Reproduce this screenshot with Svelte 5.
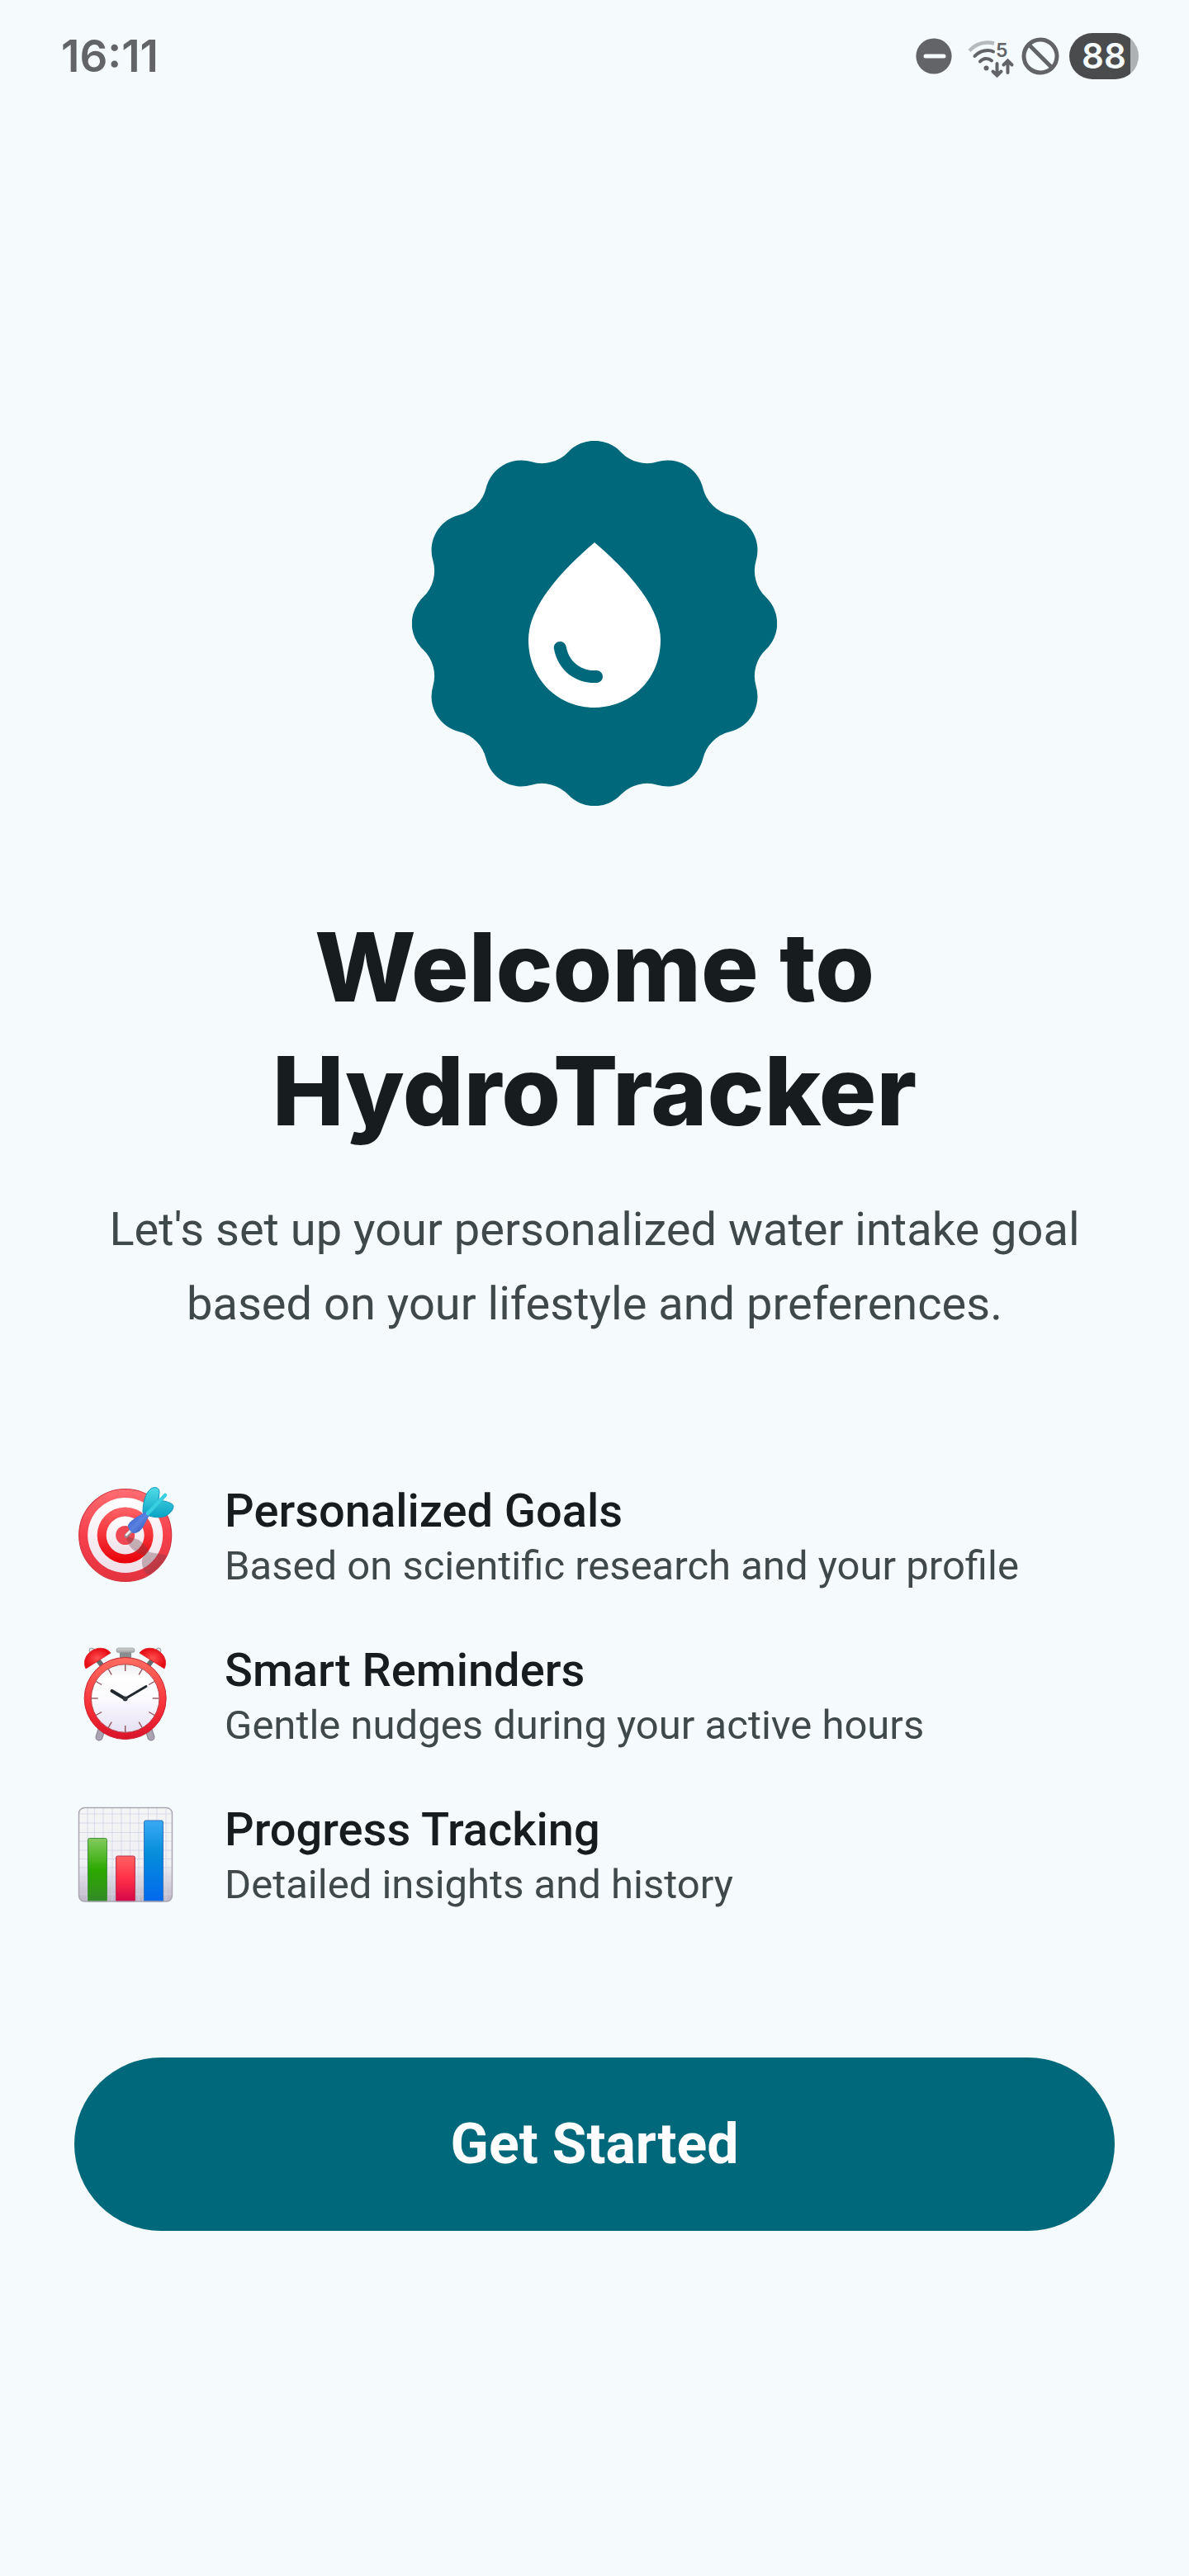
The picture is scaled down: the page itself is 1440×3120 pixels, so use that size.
<script>
  const toPoint = (deg, r) => {
    const a = (deg * Math.PI) / 180;
    return `${(240 + r * Math.sin(a)).toFixed(2)} ${(245 - r * Math.cos(a)).toFixed(2)}`;
  };

  // Twelve-lobed badge outline: a convex arc for each lobe, a concave one between lobes.
  const lobeHalf = 8.72;
  const edge = 210;
  let badge = `M${toPoint(-lobeHalf, edge)}`;
  for (let i = 0; i < 12; i++) {
    badge += `A44 44 0 0 1 ${toPoint(i * 30 + lobeHalf, edge)}`;
    badge += `A44 44 0 0 0 ${toPoint((i + 1) * 30 - lobeHalf, edge)}`;
  }
  badge += 'Z';

  const ticks = Array.from({ length: 12 }, (_, i) => i * 30);
  const gridX = [26, 34.5, 45, 56, 67, 77.5, 88, 99.5, 110, 121];
  const gridY = [27, 38, 49.5, 60, 71, 81.5, 92, 103, 113.5, 124];

  const features = [
    { icon: 'target', title: 'Personalized Goals', text: 'Based on scientific research and your profile' },
    { icon: 'clock', title: 'Smart Reminders', text: 'Gentle nudges during your active hours' },
    { icon: 'chart', title: 'Progress Tracking', text: 'Detailed insights and history' }
  ];
</script>

<div class="screen">
  <header class="status">
    <time>16:11</time>
    <div class="indicators">
      <svg class="dnd" viewBox="0 0 44 44" aria-label="Do not disturb">
        <circle cx="22" cy="22" r="21.6" fill="#636467" />
        <path d="M12 22h22" stroke="#f5fafd" stroke-width="5" stroke-linecap="round" />
      </svg>
      <svg class="wifi" viewBox="0 0 56 44" aria-label="Wi-Fi">
        <g fill="none" stroke-linecap="round" stroke-width="4">
          <path d="M3 15.5C11 7 22 4 33 6.500" stroke="#b7babd" stroke-linecap="butt" stroke-width="4.500" />
          <path d="M9.500 22C16 15 26 13.500 32 16.500" stroke="#636467" />
          <path d="M16 28.500C20 24 26 24 30 27.500" stroke="#636467" />
          <path d="M36.500 31v14M31.500 40.500l5 5 5-5M49.500 42V28M44.500 32.500l5-5 5 5" stroke="#636467" />
        </g>
        <circle cx="23.500" cy="36.500" r="3" fill="#636467" />
        <text x="35" y="22.500" font-size="23" font-weight="600" fill="#636467">5</text>
      </svg>
      <svg class="blocked" viewBox="0 0 46 46" aria-label="Blocked">
        <circle cx="23" cy="23" r="20" fill="none" stroke="#636467" stroke-width="5" />
        <path d="M9 9l28 28" stroke="#636467" stroke-width="5" />
      </svg>
      <span class="battery">88</span>
    </div>
  </header>

  <main>
    <svg class="badge" viewBox="19 24 442 442" aria-hidden="true">
      <path d={badge} fill="#00687b" />
      <path
        transform="translate(120 127) scale(10)"
        fill="#fff"
        d="M12 2c-5.330 4.550-8 8.480-8 11.800 0 4.980 3.800 8.200 8 8.200s8-3.220 8-8.200c0-3.320-2.670-7.250-8-11.800zM7.830 14c.37 0 .67.26.74.62.41 2.220 2.280 2.980 3.640 2.870.43-.02.79.32.79.75 0 .4-.32.73-.72.75-2.130.13-4.620-1.090-5.190-4.120-.08-.45.28-.87.74-.87z"
      />
    </svg>

    <h1>Welcome to HydroTracker</h1>
    <p class="lead">Let's set up your personalized water intake goal based on your lifestyle and preferences.</p>

    <ul>
      {#each features as feature}
        <li>
          {#if feature.icon === 'target'}
            <svg class="emoji" viewBox="10 16 120 120" aria-hidden="true">
              <defs>
                <linearGradient id="tRed" x1="0" y1="0" x2="0" y2="1">
                  <stop offset="0" stop-color="#ff6d72" />
                  <stop offset="0.5" stop-color="#f5404c" />
                  <stop offset="1" stop-color="#e5323f" />
                </linearGradient>
                <linearGradient id="tMid" x1="0" y1="0" x2="0" y2="1">
                  <stop offset="0" stop-color="#ff6468" />
                  <stop offset="1" stop-color="#e90008" />
                </linearGradient>
                <linearGradient id="tWhite" x1="0" y1="0" x2="0" y2="1">
                  <stop offset="0" stop-color="#ffffff" />
                  <stop offset="1" stop-color="#f0dfe8" />
                </linearGradient>
                <linearGradient id="tFin" x1="0" y1="0" x2="0" y2="1">
                  <stop offset="0" stop-color="#4fdce6" />
                  <stop offset="1" stop-color="#0aa3c4" />
                </linearGradient>
                <linearGradient id="tBarrel" x1="0" y1="0" x2="1" y2="1">
                  <stop offset="0" stop-color="#2f56c4" />
                  <stop offset="0.5" stop-color="#5a82e0" />
                  <stop offset="1" stop-color="#2a49a8" />
                </linearGradient>
                <clipPath id="tClip"><circle cx="71.7" cy="79.5" r="56" /></clipPath>
              </defs>
              <circle cx="71.7" cy="79.5" r="56" fill="url(#tRed)" stroke="#d3353f" stroke-width="1.2" />
              <circle cx="71.7" cy="79.5" r="45.500" fill="url(#tWhite)" />
              <circle cx="71.7" cy="79.5" r="34" fill="url(#tMid)" />
              <circle cx="71.7" cy="79.5" r="23" fill="url(#tWhite)" />
              <circle cx="71.7" cy="79.5" r="11.500" fill="#f04854" />
              <path clip-path="url(#tClip)" d="M72 80l16 5c6 4 10 9 13 15l18 3 10 6-20 22-12-5c-5-8-7-14-3-22-8-3-14-7-18-13z" fill="#6d4048" opacity="0.35" />
              <path d="M93 52c0-12 3-24 10-29 5-3 10-1 10 4l-1 10c8 1 17 3 18 7 0 5-4 9-9 12-6 3-16 2-23-1z" fill="url(#tFin)" stroke="#1597bd" stroke-width="1" />
              <path d="M73 80l9-9" stroke="#9a8c93" stroke-width="5" stroke-linecap="round" />
              <path d="M73 79l8-8" stroke="#f5eef0" stroke-width="2.500" stroke-linecap="round" />
              <path d="M75 68c0-3 4-6 8-9l13-8 5 4-8 15c-2 3-6 7-10 7s-8-5-8-9z" fill="url(#tBarrel)" />
              <path d="M99 53l21-22" stroke="#38cfe0" stroke-width="4.500" stroke-linecap="round" />
            </svg>
          {:else if feature.icon === 'clock'}
            <svg class="emoji" viewBox="10 14 120 120" aria-hidden="true">
              <defs>
                <linearGradient id="cRim" x1="0" y1="0" x2="0" y2="1">
                  <stop offset="0" stop-color="#ff6e60" />
                  <stop offset="0.6" stop-color="#f83038" />
                  <stop offset="1" stop-color="#d9142a" />
                </linearGradient>
                <linearGradient id="cFace" x1="0" y1="0" x2="0" y2="1">
                  <stop offset="0" stop-color="#ededf0" />
                  <stop offset="0.2" stop-color="#ffffff" />
                  <stop offset="0.5" stop-color="#fcfbfe" />
                  <stop offset="1" stop-color="#e6e0f4" />
                </linearGradient>
                <radialGradient id="cBell">
                  <stop offset="0" stop-color="#ff5050" />
                  <stop offset="1" stop-color="#e60c14" />
                </radialGradient>
                <linearGradient id="cMetal" x1="0" y1="0" x2="0" y2="1">
                  <stop offset="0" stop-color="#d2d2d2" />
                  <stop offset="1" stop-color="#a0a2a3" />
                </linearGradient>
              </defs>
              <path d="M44 117l-4 12M99 117l4 12" stroke="#888292" stroke-width="9" stroke-linecap="round" />
              <path d="M44 117l-4 12M99 117l4 12" stroke="#a9a3b2" stroke-width="7" stroke-linecap="round" />
              <path d="M38 35l7 9M105 35l-7 9" stroke="#666c70" stroke-width="6" />
              <circle cx="31" cy="24" r="3" fill="#dde0e1" stroke="#969b9d" />
              <circle cx="112" cy="24" r="3" fill="#dde0e1" stroke="#969b9d" />
              <g fill="url(#cBell)" stroke="#d91a20" stroke-width="0.800">
                <path d="M54 27C49 20 37 19 29 26c-7 6-8 14-5 20z" />
                <path d="M89 27c5-7 17-8 25-1 7 6 8 14 5 20z" />
              </g>
              <rect x="65" y="25" width="14" height="10" fill="#888d8f" />
              <rect x="61" y="21" width="22" height="5.500" rx="2.500" fill="url(#cMetal)" stroke="#93989a" stroke-width="0.700" />
              <circle cx="71.7" cy="82" r="49.500" fill="url(#cRim)" stroke="#ca2733" stroke-width="1" />
              <circle cx="71.7" cy="82" r="41.300" fill="url(#cFace)" stroke="#b7444a" stroke-width="1" />
              {#each ticks as angle}
                <path d="M71.700 41v8" stroke="#91535b" stroke-width="1.400" transform="rotate({angle} 71.7 82)" />
              {/each}
              <path d="M55.500 73l16 9.500" stroke="#20262d" stroke-width="4" stroke-linecap="round" />
              <path d="M71.500 82.500L97 67.500" stroke="#20262d" stroke-width="3" stroke-linecap="round" />
              <circle cx="71.7" cy="82.5" r="3" fill="#30363c" />
            </svg>
          {:else}
            <svg class="emoji" viewBox="10 12 120 120" aria-hidden="true">
              <defs>
                <linearGradient id="gPaper" x1="0" y1="0" x2="0" y2="1">
                  <stop offset="0" stop-color="#f5f5f5" />
                  <stop offset="0.6" stop-color="#f0f0f4" />
                  <stop offset="1" stop-color="#bdb5c7" />
                </linearGradient>
                <linearGradient id="gGreen" x1="0" y1="0" x2="0" y2="1">
                  <stop offset="0" stop-color="#84cb5f" />
                  <stop offset="0.5" stop-color="#2ca900" />
                  <stop offset="1" stop-color="#338a28" />
                </linearGradient>
                <linearGradient id="gRed" x1="0" y1="0" x2="0" y2="1">
                  <stop offset="0" stop-color="#ff6260" />
                  <stop offset="0.5" stop-color="#ff3048" />
                  <stop offset="1" stop-color="#d40648" />
                </linearGradient>
                <linearGradient id="gBlue" x1="0" y1="0" x2="0" y2="1">
                  <stop offset="0" stop-color="#39a9f4" />
                  <stop offset="0.4" stop-color="#078edb" />
                  <stop offset="1" stop-color="#0268ee" />
                </linearGradient>
              </defs>
              <rect x="15.5" y="19.5" width="113" height="113.500" rx="7" fill="url(#gPaper)" />
              {#each gridX as x}
                <path d="M{x} 20v113" stroke="#d0d4e6" stroke-width="0.800" />
              {/each}
              {#each gridY as y}
                <path d="M16 {y}h112" stroke="#d0d4e6" stroke-width="0.800" />
              {/each}
              <path d="M26.500 133V58.500q0-2 2-2h19q2 0 2 2V133z" fill="url(#gGreen)" stroke="#43913a" stroke-width="1" />
              <path d="M60.500 133V80q0-2 2-2h19q2 0 2 2v53z" fill="url(#gRed)" stroke="#b83251" stroke-width="1" />
              <path d="M94.500 133V37q0-2 2-2h19q2 0 2 2v96z" fill="url(#gBlue)" stroke="#3174bd" stroke-width="1" />
              <rect x="15.5" y="19.5" width="113" height="113.500" rx="7" fill="none" stroke="#aaa7b2" stroke-width="1.500" />
            </svg>
          {/if}
          <div class="copy">
            <h2>{feature.title}</h2>
            <p>{feature.text}</p>
          </div>
        </li>
      {/each}
    </ul>

    <button type="button">Get Started</button>
  </main>
</div>

<style>
  :global(body) {
    background: #f5fafd;
  }

  .screen {
    display: flex;
    flex-direction: column;
    min-height: 100vh;
    box-sizing: border-box;
    background: #f5fafd;
    color: #171d1f;
    font-family: Roboto, sans-serif;
  }

  .status {
    display: flex;
    align-items: center;
    justify-content: space-between;
    padding: 36px 61px 36px 74px;
    color: #636467;
    font-family: Inter, sans-serif;
  }

  time {
    font-size: 53px;
    line-height: 64px;
    font-weight: 600;
  }

  .indicators {
    display: flex;
    align-items: center;
  }

  .indicators svg {
    overflow: visible;
  }

  .dnd {
    width: 44px;
    height: 44px;
    margin-right: 18px;
  }

  .wifi {
    width: 56px;
    height: 44px;
    margin-right: 10px;
  }

  .blocked {
    width: 46px;
    height: 46px;
    margin-right: 12px;
  }

  .battery {
    box-sizing: border-box;
    width: 84px;
    border-radius: 28px;
    background: linear-gradient(to right, #4a4b4d 88%, #afb2b5 88%);
    color: #f5fafd;
    font-size: 42px;
    line-height: 56px;
    font-weight: 600;
    text-align: center;
  }

  main {
    display: flex;
    flex-direction: column;
    padding: 398px 90px 90px;
  }

  .badge {
    align-self: center;
    width: 442px;
    height: 442px;
  }

  h1 {
    margin: 120px 0 0;
    font-family: Inter, sans-serif;
    font-size: 116px;
    line-height: 150px;
    font-weight: 800;
    text-align: center;
  }

  .lead {
    margin: 48px 0 0;
    color: #3f484b;
    font-size: 56px;
    line-height: 90px;
    text-align: center;
  }

  ul {
    display: flex;
    flex-direction: column;
    gap: 60px;
    margin: 172px 0 177px;
    padding: 0;
    list-style: none;
  }

  li {
    display: flex;
    align-items: flex-start;
    gap: 62px;
  }

  .emoji {
    flex: none;
    width: 120px;
    height: 120px;
    overflow: visible;
  }

  h2 {
    margin: 0;
    font-size: 56px;
    line-height: 68px;
    font-weight: 500;
  }

  .copy p {
    margin: 0;
    color: #3f484b;
    font-size: 49px;
    line-height: 65px;
  }

  button {
    padding: 65px 40px;
    border: 0;
    border-radius: 105px;
    background: #00687b;
    color: #fff;
    font-family: Roboto, sans-serif;
    font-size: 68px;
    line-height: 80px;
    font-weight: 700;
    cursor: pointer;
  }
</style>
